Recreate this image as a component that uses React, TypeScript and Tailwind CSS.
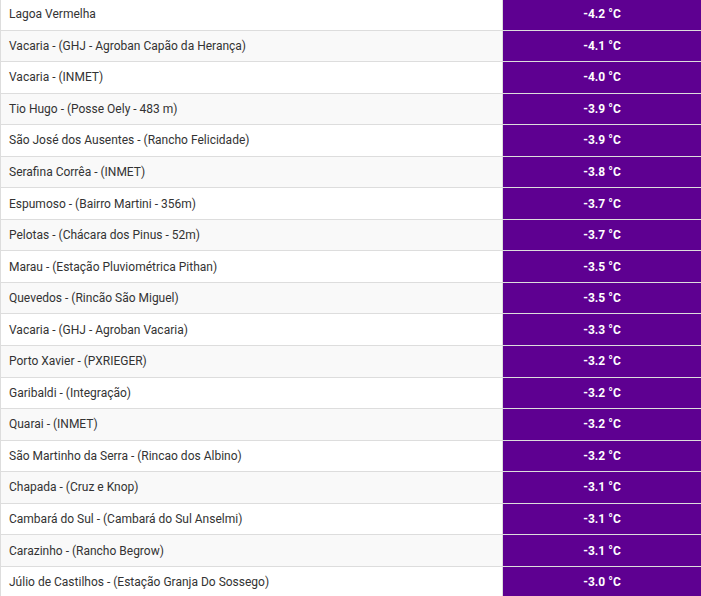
const rows: [string, string][] = [
  ['Lagoa Vermelha', '-4.2'],
  ['Vacaria - (GHJ - Agroban Capão da Herança)', '-4.1'],
  ['Vacaria - (INMET)', '-4.0'],
  ['Tio Hugo - (Posse Oely - 483 m)', '-3.9'],
  ['São José dos Ausentes - (Rancho Felicidade)', '-3.9'],
  ['Serafina Corrêa - (INMET)', '-3.8'],
  ['Espumoso - (Bairro Martini - 356m)', '-3.7'],
  ['Pelotas - (Chácara dos Pinus - 52m)', '-3.7'],
  ['Marau - (Estação Pluviométrica Pithan)', '-3.5'],
  ['Quevedos - (Rincão São Miguel)', '-3.5'],
  ['Vacaria - (GHJ - Agroban Vacaria)', '-3.3'],
  ['Porto Xavier - (PXRIEGER)', '-3.2'],
  ['Garibaldi - (Integração)', '-3.2'],
  ['Quarai - (INMET)', '-3.2'],
  ['São Martinho da Serra - (Rincao dos Albino)', '-3.2'],
  ['Chapada - (Cruz e Knop)', '-3.1'],
  ['Cambará do Sul - (Cambará do Sul Anselmi)', '-3.1'],
  ['Carazinho - (Rancho Begrow)', '-3.1'],
  ['Júlio de Castilhos - (Estação Granja Do Sossego)', '-3.0'],
]

export default function App() {
  return (
    <div className="h-[596px] w-[701px] overflow-hidden bg-white font-['Roboto',sans-serif]">
      <table className="-mt-[2px] w-[701px] border-collapse text-[12px]">
        <tbody>
          {rows.map(([name, temp], i) => (
            <tr key={i} className={i % 2 === 0 ? 'bg-white' : 'bg-[#f9f9f9]'}>
              <td className="h-[31.55px] w-[502px] border border-[#dddddd] pl-2 text-[#333333]">{name}</td>
              <td className="border border-y-[#dddddd] border-l-[#dddddd] border-r-0 bg-[#5e0091] text-center text-[12px] font-bold text-white">
                {temp} °C
              </td>
            </tr>
          ))}
        </tbody>
      </table>
    </div>
  )
}
